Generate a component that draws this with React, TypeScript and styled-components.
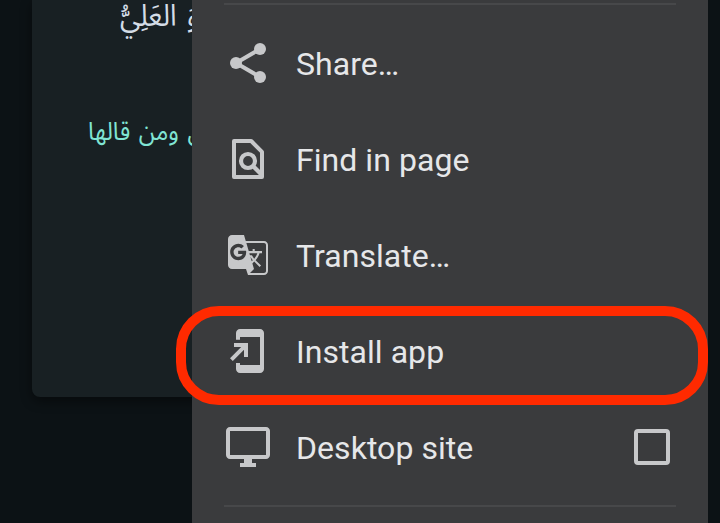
import React from "react";
import styled, { createGlobalStyle } from "styled-components";

const GlobalStyle = createGlobalStyle`
  *, *::before, *::after { box-sizing: border-box; }
  body { margin: 0; background: #0c1215; overflow: hidden; }
`;

const Screen = styled.main`
  display: grid;
  grid-template-columns: 192px 516px 12px;
  width: 720px;
  height: 523px;
  overflow: hidden;
  background: #0c1215;
  font-family: Roboto, "Liberation Sans", sans-serif;
`;

const Page = styled.section`
  padding-left: 32px;
  overflow: hidden;
`;

const Card = styled.article`
  width: 300px;
  height: 397px;
  border-radius: 0 0 8px 8px;
  background: #182023;
  box-shadow: 0 4px 12px rgba(0, 0, 0, 0.45);
`;

const ArabicLine = styled.p<{
  $top: number;
  $left: number;
  $color: string;
  $size: number;
  $gap: number;
  $stretch: number;
  $leading: number;
}>`
  margin: 0;
  padding: ${(p) => p.$top}px 0 0 ${(p) => p.$left}px;
  color: ${(p) => p.$color};
  font: ${(p) => p.$size}px/${(p) => p.$leading}px "Noto Sans Arabic", "Noto Sans", "DejaVu Sans", sans-serif;
  word-spacing: ${(p) => p.$gap}px;
  white-space: nowrap;

  bdi {
    display: inline-block;
    transform: scaleY(${(p) => p.$stretch});
  }
`;

const Menu = styled.nav`
  position: relative;
  display: flex;
  flex-direction: column;
  padding-top: 3px;
  background: #3a3b3d;
`;

const Divider = styled.hr`
  flex: none;
  width: 452px;
  height: 2px;
  margin: 0 32px;
  border: 0;
  background: #47484a;
`;

const Items = styled.div`
  padding: 10px 0;
`;

const Item = styled.div`
  display: flex;
  align-items: center;
  height: 96px;
  padding: 0 38px 0 32px;
  color: #c7c8ca;
`;

const Label = styled.span`
  flex: 1;
  margin-left: 24px;
  padding-top: 2px;
  color: #e6e7e9;
  font-size: 32px;
  line-height: 40px;
  letter-spacing: 0.05px;
`;

const Icon = styled.svg`
  flex: none;
  width: 48px;
  height: 48px;
  fill: currentColor;
`;

const Checkbox = styled.span`
  width: 36px;
  height: 36px;
  border: 4px solid #c7c8ca;
  border-radius: 4px;
`;

const Highlight = styled.div`
  position: absolute;
  top: 306px;
  left: -16px;
  width: 532px;
  height: 99px;
  border: 10px solid #ff2a00;
  border-radius: 43px;
  pointer-events: none;
`;

const ShareIcon = () => (
  <Icon viewBox="0 0 24 24">
    <path d="M18 5 6 12l12 7" fill="none" stroke="currentColor" strokeWidth="2" />
    <circle cx="18" cy="5" r="3" />
    <circle cx="6" cy="12" r="3" />
    <circle cx="18" cy="19" r="3" />
  </Icon>
);

const FindIcon = () => (
  <Icon viewBox="0 0 24 24">
    <path
      d="M5 3h8.6L19 8.4V21H5z"
      fill="none"
      stroke="currentColor"
      strokeWidth="2"
      strokeLinejoin="round"
    />
    <circle cx="12" cy="13" r="3.5" fill="none" stroke="currentColor" strokeWidth="2.1" />
    <path d="m14.2 15.2 4.4 4.4" fill="none" stroke="currentColor" strokeWidth="2.2" />
  </Icon>
);

const TranslateIcon = () => (
  <Icon viewBox="0 0 24 24">
    <path d="M20 5h-9.12L10 2H4c-1.1 0-2 .9-2 2v13c0 1.1.9 2 2 2h7l1 3h8c1.1 0 2-.9 2-2V7c0-1.1-.9-2-2-2zM7.17 14.59c-2.25 0-4.09-1.83-4.09-4.09s1.83-4.09 4.09-4.09c1.04 0 1.99.37 2.74 1.07l.07.06-1.23 1.18-.06-.05c-.29-.27-.78-.59-1.52-.59-1.31 0-2.38 1.09-2.38 2.42s1.07 2.42 2.38 2.42c1.37 0 1.96-.87 2.12-1.46H7.08V9.91h3.95l.01.07c.04.21.05.4.05.61 0 2.35-1.61 4-3.92 4zm6.03-1.71c.33.6.74 1.18 1.19 1.7l-.54.53-.65-2.23zm.77-.76h-.99l-.31-1.04h3.99s-.34 1.31-1.56 2.74c-.52-.62-.89-1.23-1.13-1.7zM21 20c0 .55-.45 1-1 1h-7l2-2-.81-2.77.92-.92L17.79 18l.73-.73-2.71-2.68c.9-1.03 1.6-2.25 1.92-3.51H19v-1.04h-3.64V9h-1.04v1.04h-1.96L11.18 6H20c.55 0 1 .45 1 1v13z" />
  </Icon>
);

const InstallIcon = () => (
  <Icon viewBox="0 0 24 24">
    <path d="M18 1H8c-1.1 0-2 .9-2 2v3.4h2V5h10v14H8v-1H6v3c0 1.1.9 2 2 2h10c1.1 0 2-.9 2-2V3c0-1.1-.9-2-2-2zM10 15h2V8H5v2h3.59L3 15.59 4.41 17 10 11.41V15z" />
  </Icon>
);

const DesktopIcon = () => (
  <Icon viewBox="0 0 24 24">
    <path d="M21 2H3c-1.1 0-2 .9-2 2v12c0 1.1.9 2 2 2h7v2H8v2h8v-2h-2v-2h7c1.1 0 2-.9 2-2V4c0-1.1-.9-2-2-2zm0 14H3V4h18v12z" />
  </Icon>
);

const items = [
  { label: "Share…", icon: <ShareIcon /> },
  { label: "Find in page", icon: <FindIcon /> },
  { label: "Translate…", icon: <TranslateIcon /> },
  { label: "Install app", icon: <InstallIcon /> },
  { label: "Desktop site", icon: <DesktopIcon />, checkbox: true },
];

export default function App() {
  return (
    <>
      <GlobalStyle />
      <Screen>
        <Page>
          <Card>
            <ArabicLine $top={0} $left={88} $color="#d3dce6" $size={27.5} $gap={3} $stretch={1.1} $leading={33}>
              <bdi dir="rtl">وَ الْعَلِيُّ</bdi>
            </ArabicLine>
            <ArabicLine $top={80} $left={56} $color="#80e5d4" $size={23.5} $gap={2.5} $stretch={1.1} $leading={38}>
              <bdi dir="rtl">ل ومن قالها</bdi>
            </ArabicLine>
          </Card>
        </Page>
        <Menu>
          <Divider />
          <Items>
            {items.map((item) => (
              <Item key={item.label}>
                {item.icon}
                <Label>{item.label}</Label>
                {item.checkbox && <Checkbox />}
              </Item>
            ))}
          </Items>
          <Divider />
          <Highlight />
        </Menu>
      </Screen>
    </>
  );
}
